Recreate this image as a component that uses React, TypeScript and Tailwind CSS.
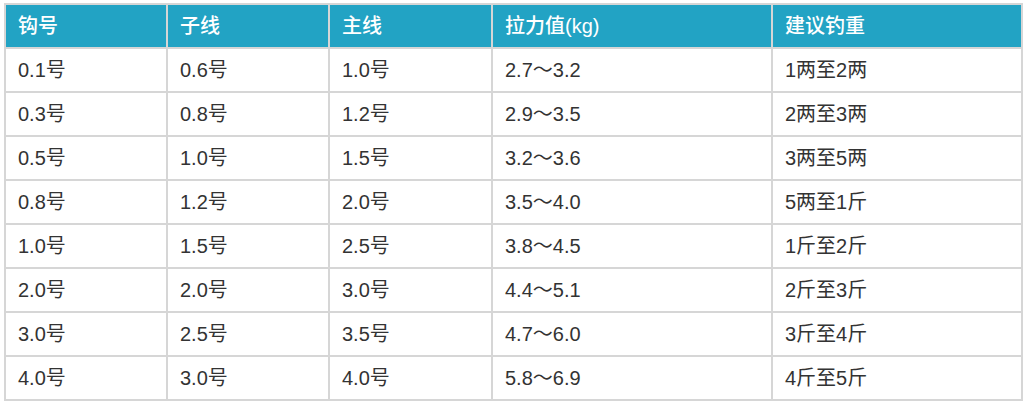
import React from "react";

const headers = ["钩号", "子线", "主线", "拉力值(kg)", "建议钓重"];

const rows = [
  ["0.1号", "0.6号", "1.0号", "2.7～3.2", "1两至2两"],
  ["0.3号", "0.8号", "1.2号", "2.9～3.5", "2两至3两"],
  ["0.5号", "1.0号", "1.5号", "3.2～3.6", "3两至5两"],
  ["0.8号", "1.2号", "2.0号", "3.5～4.0", "5两至1斤"],
  ["1.0号", "1.5号", "2.5号", "3.8～4.5", "1斤至2斤"],
  ["2.0号", "2.0号", "3.0号", "4.4～5.1", "2斤至3斤"],
  ["3.0号", "2.5号", "3.5号", "4.7～6.0", "3斤至4斤"],
  ["4.0号", "3.0号", "4.0号", "5.8～6.9", "4斤至5斤"],
];

const widths = ["w-[162px]", "w-[162px]", "w-[163px]", "w-[280px]", "w-[250px]"];

const App = () => {
  return (
    <div
      className="pl-[4px] pt-[3px] bg-white"
      style={{ fontFamily: '"Liberation Sans", "Noto Sans CJK SC", sans-serif' }}
    >
      <table className="w-[1018px] border-collapse table-fixed border-2 border-[#d6d6d6]">
        <thead>
          <tr className="h-[44px] bg-[#22a3c4]">
            {headers.map((h, i) => (
              <th
                key={h}
                className={`${widths[i]} border-2 border-[#d6d6d6] pl-[12px] text-left text-[20px] font-medium text-white`}
              >
                {h}
              </th>
            ))}
          </tr>
        </thead>
        <tbody>
          {rows.map((r, ri) => (
            <tr key={ri} className="h-[44px]">
              {r.map((c, ci) => (
                <td
                  key={ci}
                  className="border-2 border-[#d6d6d6] pl-[12px] text-[20px] text-[#333333]"
                >
                  {c}
                </td>
              ))}
            </tr>
          ))}
        </tbody>
      </table>
    </div>
  );
};

export default App;
